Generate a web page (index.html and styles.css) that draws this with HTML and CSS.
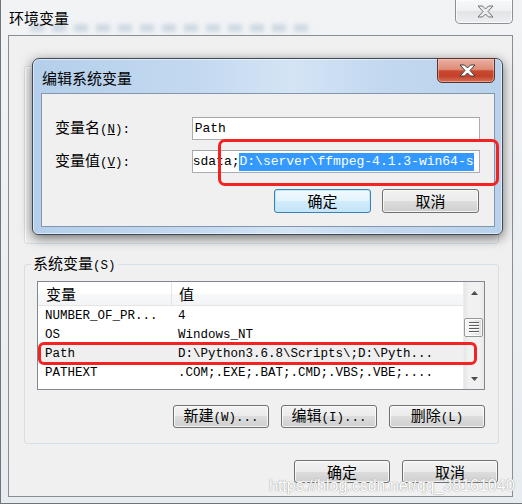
FILE: index.html
```html
<!DOCTYPE html>
<html lang="zh-CN">
<head>
    <meta charset="UTF-8">
    <title>环境变量</title>
    <link rel="stylesheet" href="styles.css">
</head>
<body>
    <div class="window">
        <div class="titlebar">
            <span class="title">环境变量</span>
            <div class="glass-streak"></div>
            <div class="close close-light">
                <svg width="58" height="24" viewBox="0 0 58 24">
                    <polygon points="23,7 27.5,7 30.5,10 33.5,7 38,7 33,12.5 38,18 33.5,18 30.5,15 27.5,18 23,18 28,12.5" fill="#ececec" stroke="#737373" stroke-width="1"/>
                </svg>
            </div>
        </div>

        <div class="client">
            <div class="group user-group"></div>

            <fieldset class="group sys-group">
                <legend>系统变量<span class="en">(S)</span></legend>
                <div class="listview">
                    <div class="list-main">
                        <div class="list-head">
                            <div class="head-cell">变量</div>
                            <div class="head-cell">值</div>
                        </div>
                        <div class="list-rows">
                            <div class="list-row"><span>NUMBER_OF_PR...</span><span>4</span></div>
                            <div class="list-row"><span>OS</span><span>Windows_NT</span></div>
                            <div class="list-row selected"><span>Path</span><span>D:\Python3.6.8\Scripts\;D:\Pyth...</span></div>
                            <div class="list-row"><span>PATHEXT</span><span>.COM;.EXE;.BAT;.CMD;.VBS;.VBE;....</span></div>
                        </div>
                    </div>
                    <div class="scrollbar">
                        <div class="sb-arrow">
                            <svg width="7" height="4" viewBox="0 0 7 4"><polygon points="0,4 3.5,0 7,4" fill="#4d4d4d"/></svg>
                        </div>
                        <div class="sb-track">
                            <div class="sb-thumb"><div class="sb-grip"></div></div>
                        </div>
                        <div class="sb-arrow">
                            <svg width="7" height="4" viewBox="0 0 7 4"><polygon points="0,0 7,0 3.5,4" fill="#4d4d4d"/></svg>
                        </div>
                    </div>
                </div>
                <div class="button-row">
                    <button class="btn">新建<span class="en">(W)...</span></button>
                    <button class="btn">编辑<span class="en">(I)...</span></button>
                    <button class="btn">删除<span class="en">(L)</span></button>
                </div>
            </fieldset>

            <div class="button-row main-buttons">
                <button class="btn">确定</button>
                <button class="btn">取消</button>
            </div>
        </div>

        <!-- edit dialog on top of the main window -->
        <div class="dialog">
            <div class="dialog-titlebar">
                <span class="title">编辑系统变量</span>
                <div class="close close-red">
                    <svg width="58" height="25" viewBox="0 0 58 25">
                        <polygon points="23,7 27.5,7 30.5,10 33.5,7 38,7 33,12.5 38,18 33.5,18 30.5,15 27.5,18 23,18 28,12.5" fill="#ffffff" stroke="#3d3d3d" stroke-width="1"/>
                    </svg>
                </div>
            </div>
            <div class="dialog-client">
                <div class="field-row">
                    <span class="field-label">变量名<span class="en">(<u>N</u>):</span></span>
                    <div class="field-input"><span class="txt">Path</span></div>
                </div>
                <div class="field-row">
                    <span class="field-label">变量值<span class="en">(<u>V</u>):</span></span>
                    <div class="field-input scrolled"><span class="txt">sdata;</span><span class="txt sel">D:\server\ffmpeg-4.1.3-win64-s</span></div>
                </div>
                <div class="button-row dialog-buttons">
                    <button class="btn btn-default">确定</button>
                    <button class="btn">取消</button>
                </div>
            </div>
        </div>

        <!-- red annotation boxes -->
        <div class="mark mark-value"></div>
        <div class="mark mark-row"></div>

        <div class="watermark">https://blog.csdn.net/qq_38161040</div>
    </div>
</body>
</html>
```

FILE: styles.css
```css
* {
    box-sizing: border-box;
}
body {
    margin: 0;
    background: #dfe6ec;
    font-family: "Noto Sans CJK SC", sans-serif;
    font-size: 15px;
    color: #000;
}
.en {
    font-family: "Liberation Mono", monospace;
    font-size: 12.5px;
}
.window {
    position: relative;
    width: 522px;
    height: 504px;
    overflow: hidden;
    background: linear-gradient(to bottom, #f1f3f5 0%, #eceff2 60%, #e6ecf1 100%);
    box-shadow: inset 1px 0 0 #70757a, inset 0 -1px 0 #70757a;
}
.titlebar {
    position: relative;
    height: 35px;
    display: flex;
    justify-content: space-between;
    align-items: flex-start;
    padding: 0 9px;
}
.title {
    margin-top: 9px;
    line-height: 18px;
    font-size: 15px;
    position: relative;
    z-index: 1;
}
.glass-streak {
    position: absolute;
    left: 30px;
    top: 24px;
    width: 280px;
    height: 8px;
    border-radius: 4px;
    background: repeating-linear-gradient(90deg, #b9c9d8 0 14px, transparent 14px 22px);
    filter: blur(2px);
    opacity: 0.6;
}
.close {
    width: 58px;
    height: 24px;
    border: 1px solid #8a8f96;
    border-top: 0;
    border-radius: 0 0 5px 5px;
    overflow: hidden;
}
.close svg {
    display: block;
    margin: -1px 0 0 -1px;
}
.close-light {
    background: linear-gradient(to bottom, #f7f8f9 0%, #eef0f2 50%, #e2e5e8 50%, #eceef0 100%);
    box-shadow: inset 0 0 0 1px rgba(255, 255, 255, 0.7);
}
.close-red {
    height: 25px;
    margin-top: -1px;
    border: 1px solid #5b3430;
    background: linear-gradient(to bottom, #eab0a2 0%, #de8c77 45%, #c9482f 52%, #c3412a 75%, #d77259 100%);
    box-shadow: inset 0 0 0 1px rgba(255, 210, 200, 0.45);
}
.client {
    margin-left: 8px;
    width: 505px;
    height: 462px;
    border: 1px solid #8a8d91;
    background: #f0f0f0;
    padding: 30px 13px 0 15px;
}
.group {
    border: 1px solid #d5dfe5;
    border-radius: 3px;
}
.user-group {
    height: 178px;
    box-shadow: inset 1px 1px 0 #fff;
}
.sys-group {
    margin: 11px 0 0;
    padding: 7px 13px 15px 12px;
    min-width: 0;
}
.sys-group legend {
    padding: 0 2px;
    margin-left: -6px;
    line-height: 16px;
}
.listview {
    height: 109px;
    border: 1px solid #828790;
    background: #fff;
    display: flex;
    overflow: hidden;
}
.list-main {
    flex: 1;
    min-width: 0;
}
.list-head {
    display: grid;
    grid-template-columns: 134px 1fr;
    height: 24px;
    background: linear-gradient(to bottom, #ffffff 0%, #ffffff 50%, #f7f8f9 50%, #f3f4f6 100%);
}
.head-cell {
    line-height: 23px;
    border-bottom: 1px solid #e5e5e5;
    padding-left: 7px;
}
.head-cell:first-child {
    border-right: 1px solid #e5e5e5;
    padding-left: 8px;
}
.list-rows {
    padding-top: 1px;
}
.list-row {
    display: grid;
    grid-template-columns: 134px 1fr;
    height: 19px;
    line-height: 19px;
    font-family: "Liberation Mono", monospace;
    font-size: 12.5px;
    white-space: nowrap;
}
.list-row span {
    overflow: hidden;
    padding-left: 7px;
}
.list-row span + span {
    padding-left: 6px;
}
.list-row.selected {
    background: #efefef;
}
.scrollbar {
    width: 21px;
    display: flex;
    flex-direction: column;
    background: linear-gradient(90deg, #e6e6e6 0%, #f1f1f1 25%, #f1f1f1 75%, #e9e9e9 100%);
    border-left: 1px solid #ececec;
}
.sb-arrow {
    height: 21px;
    display: flex;
    align-items: center;
    justify-content: center;
}
.sb-arrow svg {
    display: block;
}
.sb-track {
    flex: 1;
    padding: 15px 1px 0 0;
}
.sb-thumb {
    height: 19px;
    border: 1px solid #979797;
    border-radius: 2px;
    background: linear-gradient(90deg, #f7f7f7 0%, #ececec 50%, #dcdcdc 100%);
    box-shadow: inset 0 0 0 1px rgba(255, 255, 255, 0.8);
    display: flex;
    align-items: center;
    justify-content: center;
}
.sb-grip {
    width: 10px;
    height: 11px;
    background: repeating-linear-gradient(to bottom, #5d5d5d 0 1px, #ffffff 1px 2px, transparent 2px 3px);
}
.button-row {
    display: flex;
    justify-content: flex-end;
    gap: 12px;
    margin-top: 15px;
}
.main-buttons {
    margin: 16px 1px 0 0;
}
.btn {
    width: 96px;
    height: 23px;
    padding: 0;
    border: 1px solid #707070;
    border-radius: 3px;
    background: linear-gradient(to bottom, #f2f2f2 0%, #ebebeb 50%, #dddddd 50%, #cfcfcf 100%);
    box-shadow: inset 0 0 0 1px rgba(255, 255, 255, 0.75);
    font-family: inherit;
    font-size: 15px;
    line-height: 18px;
    color: #000;
}
.btn-default {
    border-color: #3c7fb1;
    background: linear-gradient(to bottom, #f1f9fe 0%, #e3f3fc 50%, #d2ecfb 50%, #c3e4f8 100%);
    box-shadow: inset 0 0 0 1px rgba(190, 230, 253, 0.9);
}
.dialog {
    position: absolute;
    left: 32px;
    top: 58px;
    width: 471px;
    height: 177px;
    border: 1px solid #3d4956;
    border-radius: 7px 7px 6px 6px;
    background: linear-gradient(90deg, #b4cfeb 0%, #c3d9f0 35%, #d4e4f5 55%, #c2d8ef 75%, #b9d2ec 100%);
    box-shadow: 0 3px 12px rgba(0, 0, 0, 0.55), inset 0 0 0 1px rgba(255, 255, 255, 0.55);
    padding: 0 7px 7px 8px;
    display: flex;
    flex-direction: column;
}
.dialog-titlebar {
    height: 34px;
    display: flex;
    justify-content: space-between;
    align-items: flex-start;
    padding-left: 1px;
}
.dialog-titlebar .title {
    margin-top: 10px;
}
.dialog-client {
    flex: 1;
    border: 1px solid #8496ab;
    background: #f0f0f0;
    padding: 23px 14px 0 0;
}
.field-row {
    display: flex;
    align-items: center;
    height: 23px;
}
.field-row + .field-row {
    margin-top: 10px;
}
.field-label {
    width: 150px;
    padding-left: 13px;
    line-height: 18px;
}
.field-input {
    width: 289px;
    height: 23px;
    border: 1px solid #abadb3;
    border-top-color: #a3a5ab;
    background: #fff;
    padding-left: 2px;
    display: flex;
    align-items: center;
    white-space: nowrap;
    overflow: hidden;
}
.field-input.scrolled {
    padding-left: 0;
}
.txt {
    font-family: "Liberation Mono", monospace;
    font-size: 13px;
    line-height: 18px;
}
.sel {
    background: #3399ff;
    color: #fff;
}
.dialog-buttons {
    margin: 16px 1px 0 0;
    gap: 11px;
}
.dialog-buttons .btn {
    width: 97px;
    height: 24px;
}
.mark {
    position: absolute;
    border: 3px solid #f52222;
    border-radius: 7px;
}
.mark-value {
    left: 218px;
    top: 139px;
    width: 281px;
    height: 47px;
}
.mark-row {
    left: 38px;
    top: 342px;
    width: 439px;
    height: 23px;
    border-radius: 6px;
}
.watermark {
    position: absolute;
    left: 269px;
    top: 477px;
    font-family: "Liberation Sans", Arial, sans-serif;
    font-size: 16px;
    line-height: 17px;
    color: #ffffff;
    text-shadow: 0 0 1px #9c9c9c, 0 0 1px #9c9c9c;
    white-space: nowrap;
}
```
